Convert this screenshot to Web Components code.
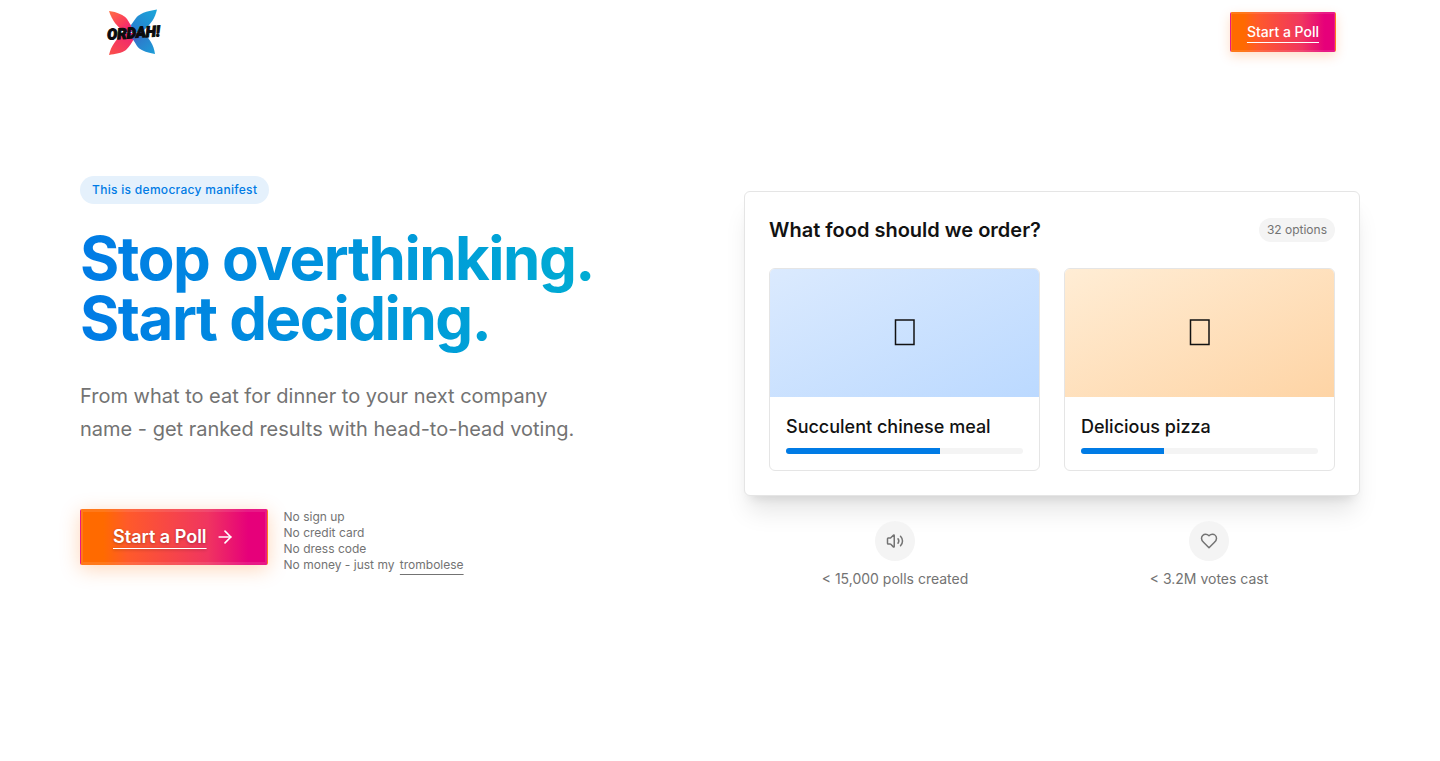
<!DOCTYPE html>
<html lang="en">
<head>
<meta charset="utf-8">
<meta name="viewport" content="width=device-width, initial-scale=1">
<title>ORDAH!</title>
<style>
  body {
    margin: 0;
    background: #fff;
    color: #121212;
    font-family: Inter, "Liberation Sans", sans-serif;
    --muted: #737373;
    --soft: #f4f4f4;
    --line: #e5e5e5;
    --blue: #007be5;
  }
</style>
</head>
<body>
<ordah-page></ordah-page>
<script>
const define = (name, html) => {
  const template = document.createElement('template');
  template.innerHTML = html;
  customElements.define(name, class extends HTMLElement {
    constructor() {
      super();
      this.attachShadow({ mode: 'open' }).append(template.content.cloneNode(true));
    }
  });
};

define('ordah-logo', `
  <style>
    :host { display: block; }
    a { display: block; }
    svg { display: block; }
    text { font: italic 900 15px Roboto, sans-serif; fill: #0b0b0d; stroke: #0b0b0d; stroke-width: 1px; }
  </style>
  <a href="#" aria-label="ORDAH! home">
    <svg width="60" height="64" viewBox="0 0 60 64">
      <defs>
        <linearGradient id="warm" x1="0" y1="0" x2="1" y2="1"><stop offset="0" stop-color="#ff7043"/><stop offset=".55" stop-color="#fb3b5c"/><stop offset="1" stop-color="#e5148c"/></linearGradient>
        <linearGradient id="warm2" x1="0" y1="1" x2="1" y2="0"><stop offset="0" stop-color="#fb5148"/><stop offset="1" stop-color="#ee1c78"/></linearGradient>
        <linearGradient id="cool" x1="1" y1="0" x2="0" y2="1"><stop offset="0" stop-color="#1ba7d9"/><stop offset="1" stop-color="#2879cf"/></linearGradient>
        <linearGradient id="cool2" x1="1" y1="1" x2="0" y2="0"><stop offset="0" stop-color="#1c9ed8"/><stop offset=".6" stop-color="#2c7dcc"/><stop offset="1" stop-color="#7a3fb5"/></linearGradient>
      </defs>
      <path fill="url(#warm)" d="M5 11C13 12 20 15 23 19L31 32L20 32C14 27 8 21 5 11Z"/>
      <path fill="url(#cool)" d="M53 9.500C42 11 35 14 32 18L27 25L28 34L40 30C47 24 51 18 53 9.500Z"/>
      <path fill="url(#warm2)" d="M5 55C7 46 12 39 20 33L33 33C28 43 25 47 22 50C18 53 11 54 5 55Z"/>
      <path fill="url(#cool2)" d="M51 54C41 52 36 50 33 46C30 41 28 38 26 35L38 31C45 38 50 45 51 54Z"/>
      <text x="3" y="38" transform="rotate(-4 30 32)">ORDAH!</text>
    </svg>
  </a>`);

define('poll-button', `
  <style>
    :host { display: block; flex: none; }
    button {
      display: flex; align-items: center; gap: 8px;
      box-sizing: border-box; height: 40px; padding: 0 16px;
      border: 1px solid rgba(255,255,255,.1); border-radius: 2px;
      background: linear-gradient(90deg, #ff6a00 12%, #ff5a2a 25%, #f03560 68%, #e6007a 90%);
      box-shadow: 0 4px 12px rgba(255,106,0,.22), inset 0 0 0 1px rgba(255,255,255,.1);
      color: #fff; font: 500 14px/20px Inter, sans-serif; cursor: pointer; white-space: nowrap;
    }
    span { text-decoration: underline 1px; text-underline-offset: 5px; }
    :host([size="large"]) button {
      height: 56px; padding: 0 32px;
      font-weight: 600; font-size: 18px; line-height: 28px;
      text-shadow: 0 1px 3px rgba(0,0,0,.3);
      box-shadow: 0 4px 20px rgba(255,106,0,.28), inset 0 0 0 2px rgba(255,255,255,.1);
    }
  </style>
  <button type="button"><span><slot></slot></span><slot name="icon"></slot></button>`);

define('site-header', `
  <style>
    :host { display: block; }
    header {
      display: flex; align-items: center; justify-content: space-between;
      max-width: 1280px; height: 64px; margin: 0 auto; padding: 0 24px; box-sizing: border-box;
    }
  </style>
  <header><ordah-logo></ordah-logo><poll-button>Start a Poll</poll-button></header>`);

define('hero-copy', `
  <style>
    :host { display: block; }
    .badge {
      display: inline-block; padding: 4px 12px; border-radius: 14px;
      background: #e5f1fc; color: var(--blue);
      font-weight: 500; font-size: 12px; line-height: 20px; letter-spacing: 0.025em;
      vertical-align: top;
    }
    h1 {
      width: fit-content; margin: 24px 0 0; padding-bottom: 8px;
      font-weight: 700; font-size: 60px; line-height: 60px; letter-spacing: -0.025em;
      color: transparent;
      background: linear-gradient(to right, #007be5, #00acd3);
      -webkit-background-clip: text; background-clip: text;
    }
    p { max-width: 512px; margin: 24px 0 0; color: var(--muted); font-size: 20px; line-height: 33px; }
    .actions { display: flex; align-items: flex-start; gap: 16px; margin-top: 63px; }
    ul { list-style: none; margin: 0; padding: 0; color: var(--muted); font-size: 12px; line-height: 16px; }
    a { color: inherit; margin-left: 2px; text-decoration: underline 1px; text-underline-offset: 5px; }
    svg { display: block; }
  </style>
  <span class="badge">This is democracy manifest</span>
  <h1>Stop overthinking.<br>Start deciding.</h1>
  <p>From what to eat for dinner to your next company name - get ranked results with head-to-head voting.</p>
  <div class="actions">
    <poll-button size="large">Start a Poll
      <svg slot="icon" width="20" height="20" viewBox="0 0 24 24" fill="none" stroke="currentColor" stroke-width="2" stroke-linecap="round" stroke-linejoin="round" aria-hidden="true"><path d="M5 12h14"/><path d="m12 5 7 7-7 7"/></svg>
    </poll-button>
    <ul>
      <li>No sign up</li>
      <li>No credit card</li>
      <li>No dress code</li>
      <li>No money - just my <a href="#">trombolese</a></li>
    </ul>
  </div>`);

define('poll-option', `
  <style>
    :host { display: block; border: 1px solid var(--line); border-radius: 6px; overflow: hidden; background: #fff; }
    .picture {
      display: flex; align-items: center; justify-content: center; height: 128px;
      background: var(--picture);
    }
    svg { display: block; fill: none; stroke: currentColor; stroke-width: 1.5; }
    .body { padding: 16px; }
    h3 { margin: 0 0 8px; font-weight: 500; font-size: 18px; line-height: 27px; }
    .track { height: 6px; border-radius: 3px; overflow: hidden; background: var(--soft); }
    .fill { width: var(--share); height: 100%; background: var(--blue); }
  </style>
  <div class="picture"><svg width="22" height="28" viewBox="0 0 22 28" aria-hidden="true"><path d="M1.500 1H20V25.500H1.500Z"/></svg></div>
  <div class="body">
    <h3><slot></slot></h3>
    <div class="track"><div class="fill"></div></div>
  </div>`);

define('poll-card', `
  <style>
    :host {
      display: block; padding: 24px; border: 1px solid var(--line); border-radius: 6px; background: #fff;
      box-shadow: 0 20px 25px -5px rgba(0,0,0,.1), 0 8px 10px -6px rgba(0,0,0,.1);
    }
    header { display: flex; align-items: center; justify-content: space-between; margin-bottom: 24px; }
    h2 { margin: 0; font-weight: 600; font-size: 20px; line-height: 28px; }
    .count { padding: 4px 8px; border-radius: 12px; background: var(--soft); color: var(--muted); font-size: 12px; line-height: 16px; }
    .options { display: grid; grid-template-columns: 1fr 1fr; gap: 24px; }
    .meal { --picture: linear-gradient(to bottom right, #dbeafe, #bbd9ff); --share: 65%; }
    .pizza { --picture: linear-gradient(to bottom right, #ffedd5, #fed4a5); --share: 35%; }
  </style>
  <header><h2>What food should we order?</h2><span class="count">32 options</span></header>
  <div class="options">
    <poll-option class="meal">Succulent chinese meal</poll-option>
    <poll-option class="pizza">Delicious pizza</poll-option>
  </div>`);

define('stat-item', `
  <style>
    :host { display: flex; flex-direction: column; align-items: center; gap: 8px; color: var(--muted); font-size: 14px; line-height: 20px; }
    .disc { display: flex; align-items: center; justify-content: center; width: 40px; height: 40px; border-radius: 50%; background: var(--soft); }
  </style>
  <div class="disc"><slot name="icon"></slot></div>
  <span><slot></slot></span>`);

define('ordah-page', `
  <style>
    :host { display: block; }
    main {
      display: grid; grid-template-columns: 1fr 1fr; gap: 48px; align-items: center;
      max-width: 1280px; margin: 0 auto; padding: 112px 0 128px;
    }
    hero-copy { padding-bottom: 30px; }
    .stats { display: grid; grid-template-columns: 1fr 1fr; gap: 12px; margin-top: 25px; }
    svg { display: block; fill: none; stroke: currentColor; stroke-width: 2; stroke-linecap: round; stroke-linejoin: round; }
    @media (max-width: 1023px) { main { grid-template-columns: 1fr; padding: 48px 24px; } }
  </style>
  <site-header></site-header>
  <main>
    <hero-copy></hero-copy>
    <section>
      <poll-card></poll-card>
      <div class="stats">
        <stat-item>
          <svg slot="icon" width="18" height="18" viewBox="0 0 24 24" aria-hidden="true"><path d="M11 4.700a.7.7 0 0 0-1.200-.5L6.400 7.600A1.400 1.400 0 0 1 5.400 8H3a1 1 0 0 0-1 1v6a1 1 0 0 0 1 1h2.400a1.400 1.400 0 0 1 1 .4l3.400 3.400a.7.7 0 0 0 1.200-.5z"/><path d="M16 9a5 5 0 0 1 0 6"/><path d="M19.364 18.364a9 9 0 0 0 0-12.728"/></svg>
          &lt; 15,000 polls created
        </stat-item>
        <stat-item>
          <svg slot="icon" width="18" height="18" viewBox="0 0 24 24" aria-hidden="true"><path d="M19 14c1.490-1.460 3-3.210 3-5.500A5.500 5.500 0 0 0 16.500 3c-1.760 0-3 .5-4.500 2-1.500-1.500-2.740-2-4.500-2A5.500 5.500 0 0 0 2 8.500c0 2.300 1.500 4.050 3 5.500l7 7Z"/></svg>
          &lt; 3.2M votes cast
        </stat-item>
      </div>
    </section>
  </main>`);
</script>
</body>
</html>
